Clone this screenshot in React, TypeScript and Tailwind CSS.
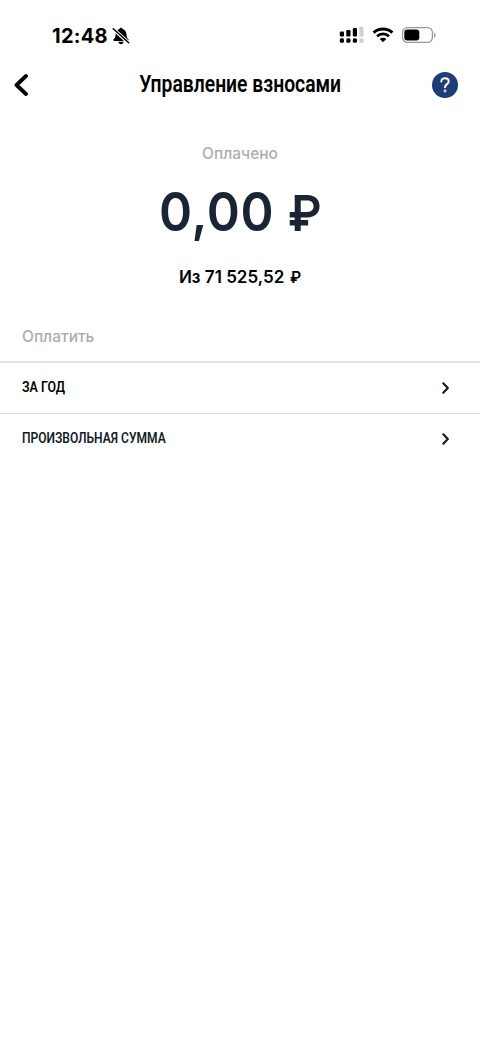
import React from "react";

function BellOff() {
  return (
    <svg width="18" height="18" viewBox="0 0 18 18" fill="none">
      <path d="M9 .8c-.9 0-1.500.6-1.600 1.300C5 2.800 3.700 4.700 3.600 7.200c-.1 2.800-.8 3.900-2 5.100-.6.600-.3 1.700.7 1.700h13.400c1 0 1.300-1.100.7-1.700-1.200-1.200-1.900-2.300-2-5.100-.1-2.500-1.400-4.400-3.800-5.100C10.500 1.400 9.900.8 9 .8Z" fill="#000" />
      <path d="M6.300 14.800h5.400c-.3 1.500-1.300 2.400-2.700 2.400s-2.400-.9-2.700-2.400Z" fill="#000" />
      <path d="M.8 1.500 16.800 16" stroke="#fff" strokeWidth="3.600" />
      <path d="M1.200 1.700 16.700 15.800" stroke="#000" strokeWidth="1.500" strokeLinecap="round" />
    </svg>
  );
}

function Signal() {
  return (
    <svg width="26" height="18" viewBox="0 0 26 18">
      <g fill="#000">
        <rect x="0.800" y="5.500" width="4.200" height="5" rx="1.200" />
        <rect x="7.300" y="4" width="4.200" height="6.500" rx="1.200" />
        <rect x="13.800" y="2" width="4.200" height="8.500" rx="1.200" />
        <rect x="0.800" y="12.300" width="4.200" height="4.500" rx="1.600" />
        <rect x="7.300" y="12.300" width="4.200" height="4.500" rx="1.600" />
        <rect x="13.800" y="12.300" width="4.200" height="4.500" rx="1.600" />
      </g>
      <g fill="#d0d0d0">
        <rect x="20.300" y="0.500" width="4.200" height="10" rx="1.200" />
        <rect x="20.300" y="12.300" width="4.200" height="4.500" rx="1.600" />
      </g>
    </svg>
  );
}

function Wifi() {
  return (
    <svg width="22" height="16" viewBox="0 0 22 16" fill="none" stroke="#000">
      <path d="M1.600 5.600C6.900.8 15.100.8 20.400 5.600" strokeWidth="2.900" />
      <path d="M5 9.200c3.400-3.100 8.600-3.100 12 0" strokeWidth="2.700" />
      <path d="M11 15.300 7.700 12c1.800-1.700 4.800-1.700 6.600 0Z" fill="#000" stroke="none" />
    </svg>
  );
}

function Battery() {
  return (
    <svg width="34" height="16" viewBox="0 0 34 16" fill="none">
      <rect x=".6" y=".6" width="29.800" height="14.800" rx="4.800" stroke="#999" strokeWidth="1.200" />
      <rect x="2.300" y="2.500" width="15" height="11" rx="3" fill="#000" />
      <path d="M32 5.500c1 .4 1.500 1.300 1.500 2.500s-.5 2.100-1.500 2.500Z" fill="#999" />
    </svg>
  );
}

function Row({ label, last }: { label: string; last?: boolean }) {
  return (
    <button
      className={
        last
          ? "flex h-[50px] w-full items-center justify-between pr-[30px] pl-[22px] text-[#141c28]"
          : "flex h-[51px] w-full items-center justify-between border-b border-[#dedede] pr-[30px] pl-[22px] text-black"
      }
    >
      <span
        className={
          last
            ? "origin-left scale-x-[0.802] pb-[2px] font-[Roboto,sans-serif] text-[15px] leading-5 font-semibold whitespace-nowrap"
            : "origin-left scale-x-[0.825] pb-[2px] font-[Roboto,sans-serif] text-[15px] leading-5 font-semibold whitespace-nowrap"
        }
      >
        {label}
      </span>
      <svg width="9" height="12" viewBox="0 0 9 12" fill="none" stroke="#141c28" strokeWidth="2.200" strokeLinecap="round" strokeLinejoin="round">
        <path d="m2.300 1.300 4.500 4.700-4.500 4.700" />
      </svg>
    </button>
  );
}

export default function App() {
  return (
    <main className="min-h-[1043px] w-[480px] overflow-hidden bg-white font-[Inter,sans-serif] text-black">
      <div className="flex h-[60px] items-start justify-between pt-[26px] pr-[44px] pl-[52px]">
        <div className="flex items-center gap-[4px]">
          <span className="text-[20px] leading-[20px] font-bold tracking-[0.28px]">12:48</span>
          <BellOff />
        </div>
        <div className="flex items-center">
          <Signal />
          <span className="ml-[7px]"><Wifi /></span>
          <span className="ml-[8px]"><Battery /></span>
        </div>
      </div>
      <header className="flex h-[50px] items-center justify-between pr-[22px] pl-[14px]">
        <button className="w-[34px]">
          <svg width="15" height="22" viewBox="0 0 15 22" fill="none" stroke="#000" strokeWidth="3.800" strokeLinecap="round" strokeLinejoin="round">
            <path d="M12 2 2.500 11 12 20" />
          </svg>
        </button>
        <h1 className="scale-x-[0.84] font-[Roboto,sans-serif] text-[23px] leading-7 font-semibold whitespace-nowrap">Управление взносами</h1>
        <button className="flex size-[26px] items-center justify-center rounded-full bg-[#1d3d78]">
          <svg width="12" height="16" viewBox="0 0 12 16" fill="none" stroke="#fff" strokeWidth="2" strokeLinecap="round">
            <path d="M2.300 4.500C2.300 2.400 3.900 1.200 6 1.200s3.700 1.200 3.700 3.200C9.700 7.100 6 7.200 6 10.300" />
            <circle cx="6" cy="14" r=".4" />
          </svg>
        </button>
      </header>
      <section className="flex flex-col items-center pt-[34px]">
        <p className="text-[15.5px] leading-5 font-medium text-[#adadad]">Оплачено</p>
        <p className="mt-[16px] flex h-[64px] scale-x-[0.93] items-baseline text-[54px] leading-[64px] font-semibold whitespace-pre text-[#192533]">
          <span className="tracking-[0.7px]">0,00 </span>
          <span className="text-[50px] leading-[64px]">₽</span>
        </p>
        <p className="mt-[23px] h-5 scale-x-[0.985] text-[17.3px] leading-5 font-semibold whitespace-nowrap">
          Из 71 525,52 <span className="ml-[1.5px] text-[15.5px]">₽</span>
        </p>
      </section>
      <section className="pt-[40px]">
        <h2 className="px-[22px] text-[15.5px] leading-5 font-medium text-[#adadad]">Оплатить</h2>
        <div className="mt-[14px] border-t-2 border-[#e5e5e5]">
          <Row label="ЗА ГОД" />
          <Row label="ПРОИЗВОЛЬНАЯ СУММА" last />
        </div>
      </section>
    </main>
  );
}
